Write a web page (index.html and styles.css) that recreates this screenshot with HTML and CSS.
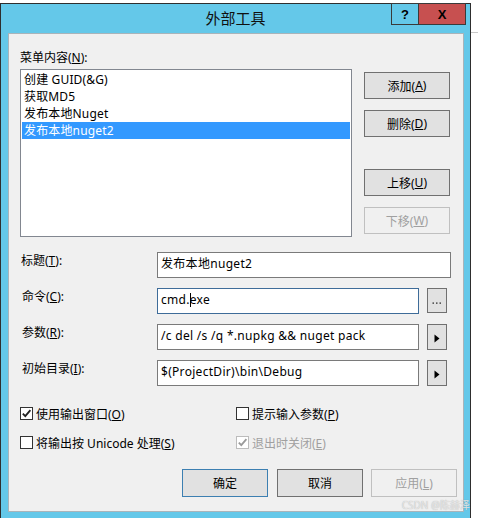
FILE: index.html
```html
<!DOCTYPE html>
<html lang="zh-CN">
<head>
<meta charset="utf-8">
<title>外部工具</title>
<link rel="stylesheet" href="styles.css">
</head>
<body>
<div class="screen">
  <div class="window">
    <div class="titlebar">
      <div class="tb-spacer"></div>
      <div class="title">外部工具</div>
      <div class="caption-btns">
        <div class="cap help">?</div>
        <div class="cap close">X</div>
      </div>
    </div>
    <div class="client">
      <div class="label-top">菜单内容(<u>N</u>):</div>
      <div class="top">
        <div class="listbox">
          <div class="item">创建 GUID(&amp;G)</div>
          <div class="item">获取MD5</div>
          <div class="item">发布本地Nuget</div>
          <div class="item selected">发布本地nuget2</div>
        </div>
        <div class="side-btns">
          <div class="btn">添加(<u>A</u>)</div>
          <div class="btn">删除(<u>D</u>)</div>
          <div class="btn move-up">上移(<u>U</u>)</div>
          <div class="btn disabled">下移(<u>W</u>)</div>
        </div>
      </div>
      <div class="fields">
        <div class="flabel">标题(<u>T</u>):</div>
        <div class="input wide">发布本地nuget2</div>
        <div class="flabel ind">命令(<u>C</u>):</div>
        <div class="input focused">cmd.<span class="caret"></span>exe</div>
        <div class="mini-btn">
          <svg width="10" height="4" viewBox="0 0 10 4"><rect x="0.5" y="1.5" width="1.5" height="1.2" fill="#222"/><rect x="4" y="1.5" width="1.5" height="1.2" fill="#222"/><rect x="7.5" y="1.5" width="1.5" height="1.2" fill="#222"/></svg>
        </div>
        <div class="flabel ind">参数(<u>R</u>):</div>
        <div class="input">/c del /s /q *.nupkg &amp;&amp; nuget pack</div>
        <div class="mini-btn arrow">
          <svg width="6" height="9" viewBox="0 0 6 9"><path d="M0.5 0.5 L5.5 4.5 L0.5 8.5 Z" fill="#000"/></svg>
        </div>
        <div class="flabel ind">初始目录(<u>I</u>):</div>
        <div class="input">$(ProjectDir)\bin\Debug</div>
        <div class="mini-btn arrow">
          <svg width="6" height="9" viewBox="0 0 6 9"><path d="M0.5 0.5 L5.5 4.5 L0.5 8.5 Z" fill="#000"/></svg>
        </div>
      </div>
      <div class="checks">
        <div class="check">
          <span class="box"><svg width="11" height="11" viewBox="0 0 11 11"><path d="M1.8 5.6 L4.3 8.2 L9.4 2.2" fill="none" stroke="#222" stroke-width="1.8"/></svg></span>
          <span>使用输出窗口(<u>O</u>)</span>
        </div>
        <div class="check">
          <span class="box"></span>
          <span>提示输入参数(<u>P</u>)</span>
        </div>
        <div class="check">
          <span class="box"></span>
          <span>将输出按 Unicode 处理(<u>S</u>)</span>
        </div>
        <div class="check disabled">
          <span class="box"><svg width="11" height="11" viewBox="0 0 11 11"><path d="M1.8 5.6 L4.3 8.2 L9.4 2.2" fill="none" stroke="#9a9a9a" stroke-width="1.8"/></svg></span>
          <span>退出时关闭(<u>E</u>)</span>
        </div>
      </div>
      <div class="actions">
        <div class="btn big default">确定</div>
        <div class="btn big">取消</div>
        <div class="btn big disabled">应用(<u>L</u>)</div>
      </div>
    </div>
  </div>
  <div class="strip">
    <div class="strip-line"></div>
  </div>
  <div class="watermark">CSDN @陈赫泽</div>
</div>
</body>
</html>
```
FILE: styles.css
```css
* { box-sizing: border-box; }
html, body {
  margin: 0;
  padding: 0;
  background: #ffffff;
  overflow: hidden;
}
body {
  width: 478px;
  height: 518px;
  font-family: "Noto Sans", "Noto Sans CJK SC", sans-serif;
  font-size: 12px;
  color: #000;
}
u { text-decoration: underline; text-underline-offset: 1px; }

.screen {
  position: relative;
  display: flex;
  width: 478px;
  height: 518px;
  padding-top: 3px;
}

.window {
  width: 471px;
  height: 520px;
  flex: none;
  background: #64c8e9;
  border: 1px solid #2e2e2e;
  border-bottom: none;
  display: flex;
  flex-direction: column;
}

.titlebar {
  height: 29px;
  flex: none;
  display: grid;
  grid-template-columns: 1fr auto 1fr;
  align-items: start;
}
.title {
  font-family: "Noto Sans CJK SC", sans-serif;
  font-size: 15px;
  line-height: 28px;
  color: #101010;
}
.caption-btns {
  justify-self: end;
  margin-top: -1px;
  margin-right: 4px;
  display: flex;
}
.cap {
  height: 22px;
  border: 1px solid #3a3a3a;
  display: flex;
  align-items: center;
  justify-content: center;
  font-family: "Liberation Sans", sans-serif;
  font-weight: bold;
  color: #000;
}
.help {
  width: 27px;
  border-right: none;
  background: #64c8e9;
  font-size: 13px;
}
.close {
  width: 48px;
  background: #c75050;
  font-size: 13px;
}

.client {
  margin: 0 6px 0 7px;
  height: 479px;
  background: #f0f0f0;
  border: 1px solid #a9b4ba;
  display: flex;
  flex-direction: column;
}

.label-top {
  margin-top: 16px;
  padding-left: 11px;
  line-height: 16px;
  height: 16px;
}

.top {
  display: flex;
  margin-top: 3px;
  padding-left: 11px;
}
.listbox {
  width: 332px;
  height: 168px;
  background: #fff;
  border: 1px solid #828790;
  padding: 1px;
}
.item {
  height: 17px;
  line-height: 17px;
  padding-left: 2px;
  white-space: nowrap;
  letter-spacing: 0.15px;
}
.item.selected {
  background: #3399ff;
  color: #fff;
}

.side-btns {
  margin-left: 12px;
  margin-top: 3px;
  display: flex;
  flex-direction: column;
  gap: 11px;
}
.btn {
  width: 86px;
  height: 27px;
  background: #e1e1e1;
  border: 1px solid #707070;
  display: flex;
  align-items: center;
  justify-content: center;
  white-space: nowrap;
}
.btn.move-up { margin-top: 21px; }
.btn.disabled {
  background: #f0f0f0;
  border-color: #c0c0c0;
  color: #a0a0a0;
}

.fields {
  margin-top: 15px;
  padding-left: 12px;
  display: grid;
  grid-template-columns: 128px 262px 20px;
  grid-auto-rows: 26px;
  column-gap: 8px;
  row-gap: 10px;
}
.flabel {
  line-height: 16px;
  padding-top: 1px;
  white-space: nowrap;
}
.flabel.ind { padding-left: 1px; }
.input {
  height: 26px;
  background: #fff;
  border: 1px solid #7a7a7a;
  padding-left: 3px;
  line-height: 22px;
  white-space: nowrap;
  overflow: hidden;
  letter-spacing: 0.3px;
}
.input.wide {
  grid-column: 2 / span 2;
  width: 294px;
}
.input.focused { border-color: #3e6c99; }
.caret {
  display: inline-block;
  width: 1px;
  height: 14px;
  background: #000;
  vertical-align: -3px;
  margin-right: -1px;
}
.mini-btn {
  width: 20px;
  height: 25px;
  align-self: start;
  background: #e1e1e1;
  border: 1px solid #707070;
  display: flex;
  align-items: flex-end;
  justify-content: center;
  padding-bottom: 7px;
}
.mini-btn.arrow {
  height: 26px;
  align-items: center;
  padding-bottom: 0;
  padding-top: 2px;
}
.mini-btn svg { display: block; }

.checks {
  margin-top: 19px;
  padding-left: 11px;
  display: grid;
  grid-template-columns: 216px 1fr;
  grid-auto-rows: 17px;
  row-gap: 12px;
}
.check {
  display: flex;
  align-items: center;
  gap: 3px;
  white-space: nowrap;
}
.box {
  width: 13px;
  height: 13px;
  background: #fff;
  border: 1px solid #333;
  display: flex;
  align-items: center;
  justify-content: center;
  flex: none;
}
.check.disabled { color: #a0a0a0; }
.check.disabled .box { border-color: #bcbcbc; }

.actions {
  margin-top: 18px;
  display: flex;
  justify-content: flex-end;
  padding-right: 6px;
  gap: 8px;
}
.btn.big { height: 28px; }
.btn.default { border-color: #3c7fb1; margin-right: 1px; }

.strip {
  flex: 1;
}
.strip-line {
  margin-top: 29px;
  height: 1px;
  background: #c8c8c8;
}

.watermark {
  position: absolute;
  right: 8px;
  bottom: 6px;
  font-family: "Noto Sans", "Noto Sans CJK SC", sans-serif;
  font-size: 10px;
  color: rgba(235, 235, 235, 0.9);
  text-shadow: 0 0 1px rgba(120, 120, 120, 0.6);
}
```
